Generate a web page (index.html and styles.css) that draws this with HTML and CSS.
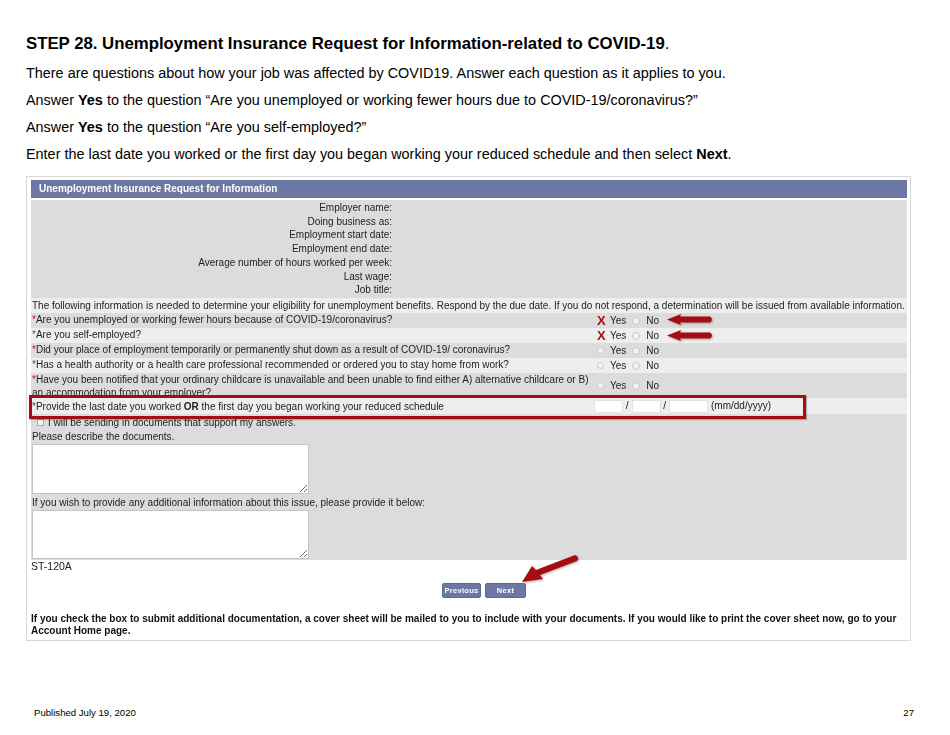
FILE: index.html
```html
<!DOCTYPE html>
<html lang="en">
<head>
    <meta charset="UTF-8">
    <title>Step 28</title>
    <link rel="stylesheet" href="styles.css">
</head>
<body>
<div class="page">
    <h1><b>STEP 28. Unemployment Insurance Request for Information-related to COVID-19</b>.</h1>
    <p>There are questions about how your job was affected by COVID19. Answer each question as it applies to you.</p>
    <p>Answer <b>Yes</b> to the question “Are you unemployed or working fewer hours due to COVID-19/coronavirus?”</p>
    <p>Answer <b>Yes</b> to the question “Are you self-employed?”</p>
    <p>Enter the last date you worked or the first day you began working your reduced schedule and then select <b>Next</b>.</p>

    <div class="shot">
        <div class="title">Unemployment Insurance Request for Information</div>
        <div class="employer">
            <div>Employer name:</div>
            <div>Doing business as:</div>
            <div>Employment start date:</div>
            <div>Employment end date:</div>
            <div>Average number of hours worked per week:</div>
            <div>Last wage:</div>
            <div>Job title:</div>
        </div>
        <div class="info">The following information is needed to determine your eligibility for unemployment benefits. Respond by the due date. If you do not respond, a determination will be issued from available information.</div>

        <div class="row dark">
            <div class="q"><i>*</i>Are you unemployed or working fewer hours because of COVID-19/coronavirus?</div>
            <div class="a"><span class="x">X</span>Yes<input type="radio">No</div>
        </div>
        <div class="row light">
            <div class="q"><i>*</i>Are you self-employed?</div>
            <div class="a"><span class="x">X</span>Yes<input type="radio">No</div>
        </div>
        <div class="row dark">
            <div class="q"><i>*</i>Did your place of employment temporarily or permanently shut down as a result of COVID-19/ coronavirus?</div>
            <div class="a"><input type="radio" class="first">Yes<input type="radio">No</div>
        </div>
        <div class="row light">
            <div class="q"><i>*</i>Has a health authority or a health care professional recommended or ordered you to stay home from work?</div>
            <div class="a"><input type="radio" class="first">Yes<input type="radio">No</div>
        </div>
        <div class="row dark tall">
            <div class="q"><i>*</i>Have you been notified that your ordinary childcare is unavailable and been unable to find either A) alternative childcare or B) an accommodation from your employer?</div>
            <div class="a"><input type="radio" class="first">Yes<input type="radio">No</div>
        </div>
        <div class="row light date">
            <div class="q"><i>*</i>Provide the last date you worked <b>OR</b> the first day you began working your reduced schedule</div>
            <div class="d">
                <input type="text" class="mm"><span>/</span><input type="text" class="mm"><span>/</span><input type="text" class="yy"><span class="fmt">(mm/dd/yyyy)</span>
            </div>
        </div>

        <div class="docs">
            <div class="check"><input type="checkbox">I will be sending in documents that support my answers.</div>
            <div class="lbl">Please describe the documents.</div>
            <textarea></textarea>
            <div class="lbl second">If you wish to provide any additional information about this issue, please provide it below:</div>
            <textarea class="last"></textarea>
        </div>
        <div class="code">ST-120A</div>
        <div class="btns">
            <button type="button">Previous</button>
            <button type="button" class="next">Next</button>
        </div>
        <div class="note">If you check the box to submit additional documentation, a cover sheet will be mailed to you to include with your documents. If you would like to print the cover sheet now, go to your Account Home page.</div>

        <div class="mark"></div>
        <svg class="arrows" viewBox="26 176 885 465" width="885" height="465">
            <path class="shade" d="M667 319.5 L681 314 L680 316.5 L710 316.5 Q714 319.5 710 322.5 L680 322.5 L681 325 Z"/>
            <path class="shade" d="M667 335.5 L681 330 L680 332.5 L710 332.5 Q714 335.5 710 338.5 L680 338.5 L681 341 Z"/>
            <path class="shade" d="M522 582 L532 566 L536 570 L575 555 Q580 557 577 561 L540 575 L543 579 Z"/>
        </svg>
    </div>

    <div class="foot">
        <span>Published July 19, 2020</span>
        <span>27</span>
    </div>
</div>
</body>
</html>
```

FILE: styles.css
```css
*{margin:0;padding:0;box-sizing:border-box;}
body{background:#fff;font-family:"Liberation Sans",Arial,sans-serif;color:#000;}
.page{
    display:flex;
    flex-direction:column;
    width:950px;
    height:735px;
    padding:34px 36px 0 26px;
}
h1{font-size:16.77px;line-height:20px;font-weight:normal;margin-bottom:11px;}
p{font-size:14.42px;line-height:17px;margin-bottom:10px;}
/* the pasted screenshot */
.shot{
    position:relative;
    width:885px;
    height:465px;
    margin-top:3px;
    padding:3px 3px 0 4px;
    border:1px solid #d8d8d8;
    font-size:10px;
    line-height:14px;
    color:#222;
    filter:blur(.3px);
}
.title{
    height:18px;
    padding-left:8px;
    background:#6b78a3;
    color:#fff;
    font-weight:bold;
    line-height:17px;
}
.employer{
    height:98px;
    margin-top:2px;
    padding-top:1px;
    background:#dcdcdc;
    line-height:13.7px;
}
.employer div{width:361px;text-align:right;}
.info{
    height:15px;
    padding-left:1px;
    background:#eee;
    line-height:15px;
    white-space:nowrap;
}
.row{
    display:flex;
    align-items:center;
    height:15px;
    padding-left:1px;
}
.dark{background:#dcdcdc;}
.light{background:#eee;}
.tall{height:25px;}
.date{height:16px;}
.q{width:561px;line-height:11px;padding-bottom:2px;}
.q i{color:#b22;font-style:normal;}
.tall .q{line-height:13px;padding:1px 0 0;}
.date .q{padding-bottom:0;}
.a{display:flex;align-items:center;padding-left:4px;line-height:15px;}
.x{
    width:13px;
    color:#a50d12;
    font-size:13px;
    font-weight:bold;
}
.a input{
    appearance:none;
    width:8px;
    height:8px;
    margin:0 6px;
    border:1px solid #c8c8c8;
    border-radius:50%;
    background:#f2f2f2;
}
.a input.first{width:7px;height:7px;margin:0 6px 0 0;}
.d{display:flex;align-items:center;margin-left:1px;}
.d input{height:13px;border:1px solid #e2e2e2;background:#fff;}
.d span{width:8.5px;text-align:center;}
.d .mm{width:29px;}
.d .yy{width:39px;}
.d .fmt{width:auto;margin-left:3px;}
.docs{
    height:146px;
    padding:1px 0 0 1px;
    background:#dcdcdc;
}
.check{display:flex;align-items:center;height:15px;padding-left:5px;}
.check input{
    appearance:none;
    width:7px;
    height:7px;
    margin-right:4px;
    border:1px solid #aaa;
    background:#f4f4f4;
}
.lbl{line-height:14px;}
.second{margin-top:2px;}
textarea{
    display:block;
    width:277px;
    height:50px;
    border:1px solid #c4c4c4;
    background:#fff;
}
.docs .last{height:49px;}
.code{height:14px;font-size:10.5px;line-height:12px;}
.btns{
    display:flex;
    justify-content:center;
    gap:4px;
    padding-top:9px;
    margin-left:30px;
}
.btns button{
    width:39px;
    height:15px;
    border:1px solid #5d6a94;
    border-radius:2px;
    background:#6b78a3;
    color:#fff;
    font:bold 7.5px "Liberation Sans",Arial,sans-serif;
    letter-spacing:.3px;
}
.btns .next{width:41px;}
.note{
    margin-top:15px;
    font-weight:bold;
    font-size:10px;
    line-height:12px;
    color:#111;
}
/* red callouts lying over the form */
.mark{
    position:absolute;
    left:2px;
    top:218px;
    width:777px;
    height:24px;
    border:3px solid #a50d12;
    box-shadow:1px 1px 1px rgba(0,0,0,.25);
}
.arrows{position:absolute;left:-1px;top:-1px;}
.shade{fill:#a50d12;filter:drop-shadow(1px 1px 1px rgba(0,0,0,.3));}
.foot{
    display:flex;
    justify-content:space-between;
    margin-top:66px;
    padding-left:8px;
    font-size:9.6px;
    line-height:12px;
}
```
